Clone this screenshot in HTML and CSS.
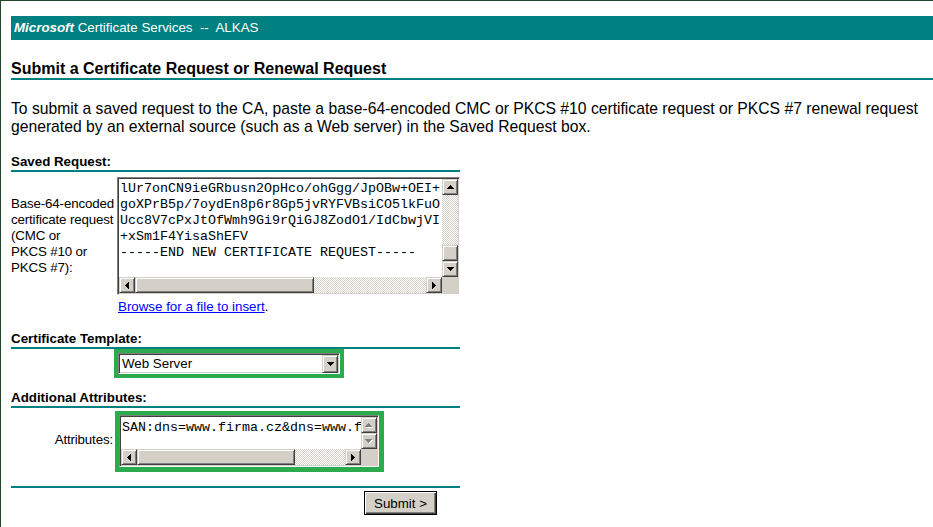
FILE: index.html
```html
<!DOCTYPE html>
<html lang="en">
<head>
<meta charset="utf-8">
<title>Microsoft Certificate Services</title>
<link rel="stylesheet" href="styles.css">
</head>
<body>
<div class="banner"><span class="brand">Microsoft</span> Certificate Services &nbsp;--&nbsp; ALKAS</div>

<h1 class="title">Submit a Certificate Request or Renewal Request</h1>

<p class="intro">To submit a saved request to the CA, paste a base-64-encoded CMC or PKCS #10 certificate request or PKCS #7 renewal request generated by an external source (such as a Web server) in the Saved Request box.</p>

<form class="form" action="#">
  <div class="section">Saved Request:</div>
  <div class="row request-row">
    <div class="label">Base-64-encoded<br>certificate request<br>(CMC or<br>PKCS #10 or<br>PKCS #7):</div>
    <div class="box box-large">
      <div class="text">lUr7onCN9ieGRbusn2OpHco/ohGgg/JpOBw+OEI+
goXPrB5p/7oydEn8p6r8Gp5jvRYFVBsiCO5lkFuO
Ucc8V7cPxJtOfWmh9Gi9rQiGJ8ZodO1/IdCbwjVI
+xSm1F4YisaShEFV
-----END NEW CERTIFICATE REQUEST-----</div>
      <div class="vbar">
        <div class="sb"><svg width="7" height="4" shape-rendering="crispEdges"><path d="M3 0h1v1H3zM2 1h3v1H2zM1 2h5v1H1zM0 3h7v1H0z"/></svg></div>
        <div class="track"></div>
        <div class="sb thumb"></div>
        <div class="sb"><svg width="7" height="4" shape-rendering="crispEdges"><path d="M0 0h7v1H0zM1 1h5v1H1zM2 2h3v1H2zM3 3h1v1H3z"/></svg></div>
      </div>
      <div class="hbar">
        <div class="sb"><svg width="4" height="7" shape-rendering="crispEdges"><path d="M0 3h1v1H0zM1 2h1v3H1zM2 1h1v5H2zM3 0h1v7H3z"/></svg></div>
        <div class="sb hthumb-large"></div>
        <div class="track"></div>
        <div class="sb"><svg width="4" height="7" shape-rendering="crispEdges"><path d="M0 0h1v7H0zM1 1h1v5H1zM2 2h1v3H2zM3 3h1v1H3z"/></svg></div>
      </div>
      <div class="corner"></div>
    </div>
    <div class="browse"><a href="#">Browse for a file to insert</a>.</div>
  </div>

  <div class="section section-template">Certificate Template:</div>
  <div class="row">
    <div class="label"></div>
    <div class="highlight highlight-select">
      <div class="select">
        <span class="select-value">Web Server</span>
        <span class="sb drop"><svg width="7" height="4" shape-rendering="crispEdges"><path d="M0 0h7v1H0zM1 1h5v1H1zM2 2h3v1H2zM3 3h1v1H3z"/></svg></span>
      </div>
    </div>
  </div>

  <div class="section section-attrs">Additional Attributes:</div>
  <div class="row attrs-row">
    <div class="label label-right">Attributes:</div>
    <div class="highlight highlight-attrs">
      <div class="box box-small">
        <div class="text">SAN:dns=www.firma.cz&amp;dns=www.f</div>
        <div class="vbar">
          <div class="sb"><svg width="8" height="5" shape-rendering="crispEdges"><path fill="#fff" d="M4 1h1v1H4zM3 2h3v1H3zM2 3h5v1H2zM1 4h7v1H1z"/><path fill="#808080" d="M3 0h1v1H3zM2 1h3v1H2zM1 2h5v1H1zM0 3h7v1H0z"/></svg></div>
          <div class="sb"><svg width="8" height="5" shape-rendering="crispEdges"><path fill="#fff" d="M1 1h7v1H1zM2 2h5v1H2zM3 3h3v1H3zM4 4h1v1H4z"/><path fill="#808080" d="M0 0h7v1H0zM1 1h5v1H1zM2 2h3v1H2zM3 3h1v1H3z"/></svg></div>
        </div>
        <div class="hbar">
          <div class="sb"><svg width="4" height="7" shape-rendering="crispEdges"><path d="M0 3h1v1H0zM1 2h1v3H1zM2 1h1v5H2zM3 0h1v7H3z"/></svg></div>
          <div class="sb hthumb-small"></div>
          <div class="track"></div>
          <div class="sb"><svg width="4" height="7" shape-rendering="crispEdges"><path d="M0 0h1v7H0zM1 1h1v5H1zM2 2h1v3H2zM3 3h1v1H3z"/></svg></div>
        </div>
        <div class="corner"></div>
      </div>
    </div>
  </div>

  <div class="rule"></div>
  <div class="actions">
    <button class="submit" type="button">Submit &gt;</button>
  </div>
</form>
</body>
</html>
```

FILE: styles.css
```css
html, body {
  margin: 0;
}

body {
  box-sizing: border-box;
  min-height: 100vh;
  padding: 15px 0 0 10px;
  background: #fff;
  color: #000;
  border-top: 1px solid #23452a;
  border-left: 1px solid #23452a;
  font-family: "Liberation Sans", Arial, sans-serif;
}

/* Top banner */
.banner {
  height: 24px;
  line-height: 24px;
  padding-left: 3px;
  background: #008080;
  color: #fff;
  font-size: 13.33px;
  white-space: nowrap;
}

.brand {
  font-weight: bold;
  font-style: italic;
}

.title {
  margin: 20px 0 0;
  font-size: 16px;
  line-height: 18px;
  font-weight: bold;
  border-bottom: 2px solid #008080;
}

.intro {
  margin: 20px 0 0;
  font-size: 15.7px;
  line-height: 18px;
}

/* Request form */
.form {
  width: 449px;
  margin-top: 18px;
  font-size: 13.33px;
  line-height: 16px;
}

.section {
  font-weight: bold;
  border-bottom: 2px solid #008080;
}

.section-template {
  margin-top: 16px;
}

.section-attrs {
  margin-top: 12px;
}

.row {
  display: grid;
  grid-template-columns: 104px auto;
  justify-content: start;
  align-items: center;
}

.label {
  white-space: nowrap;
  letter-spacing: -0.15px;
}

.request-row {
  margin-top: 5px;
}

.label-right {
  text-align: right;
  padding-right: 2px;
}

.browse {
  grid-column: 2;
  margin: 4px 0 0 3px;
}

.browse a {
  color: #0000ff;
}

/* Sunken text box with classic scrollbars */
.box {
  display: grid;
  padding: 1px;
  background: #fff;
  border: 1px solid;
  border-color: #808080 #fff #fff #808080;
  box-shadow: inset 1px 1px #404040, inset -1px -1px #d4d0c8;
}

.box-large {
  margin-left: 2px;
  grid-template-columns: 323px 16px;
  grid-template-rows: 98px 16px;
}

.box-small {
  grid-template-columns: 240px 16px;
  grid-template-rows: 32px 16px;
}

.text {
  overflow: hidden;
  padding: 2px 0 0 1px;
  font-family: "Liberation Mono", "Courier New", monospace;
  font-size: 13.33px;
  line-height: 16px;
  white-space: pre;
}

.box-small .text {
  padding-top: 3px;
}

.vbar {
  display: flex;
  flex-direction: column;
}

.hbar {
  display: flex;
}

.track {
  flex: 1;
  background-color: #fff;
  background-image: conic-gradient(#d4d0c8 0 25%, #fff 0 50%, #d4d0c8 0 75%, #fff 0);
  background-size: 2px 2px;
}

.corner {
  background: #d4d0c8;
}

.sb {
  box-sizing: border-box;
  width: 16px;
  height: 16px;
  flex: none;
  display: flex;
  align-items: center;
  justify-content: center;
  background: #d4d0c8;
  border: 1px solid;
  border-color: #d4d0c8 #404040 #404040 #d4d0c8;
  box-shadow: inset 1px 1px #fff, inset -1px -1px #808080;
}

.sb svg {
  display: block;
}

.hthumb-large {
  width: 179px;
}

.hthumb-small {
  width: 158px;
}

/* Green highlight around fields */
.highlight {
  background: #2bab4d;
}

.highlight-select {
  margin-left: -1px;
  padding: 4px;
}

.highlight-attrs {
  margin-top: 3px;
  padding: 4px 5px 5px 4px;
}

/* Drop-down list */
.select {
  box-sizing: border-box;
  width: 222px;
  height: 21px;
  display: flex;
  align-items: center;
  padding: 0 1px 0 0;
  background: #fff;
  border: 1px solid;
  border-color: #808080 #fff #fff #808080;
  box-shadow: inset 1px 1px #404040, inset -1px -1px #d4d0c8;
}

.select-value {
  flex: 1;
  padding-left: 3px;
}

.drop {
  height: 18px;
}

.rule {
  margin-top: 14px;
  border-top: 2px solid #008080;
}

.actions {
  display: flex;
  justify-content: flex-end;
  margin: 3px 23px 0 0;
}

.submit {
  box-sizing: border-box;
  width: 73px;
  height: 24px;
  padding: 0;
  background: #d4d0c8;
  color: #000;
  border: 1px solid #000;
  box-shadow: inset 1px 1px #fff, inset -1px -1px #404040, inset -2px -2px #808080;
  font-family: "Liberation Sans", Arial, sans-serif;
  font-size: 13.33px;
}
```
